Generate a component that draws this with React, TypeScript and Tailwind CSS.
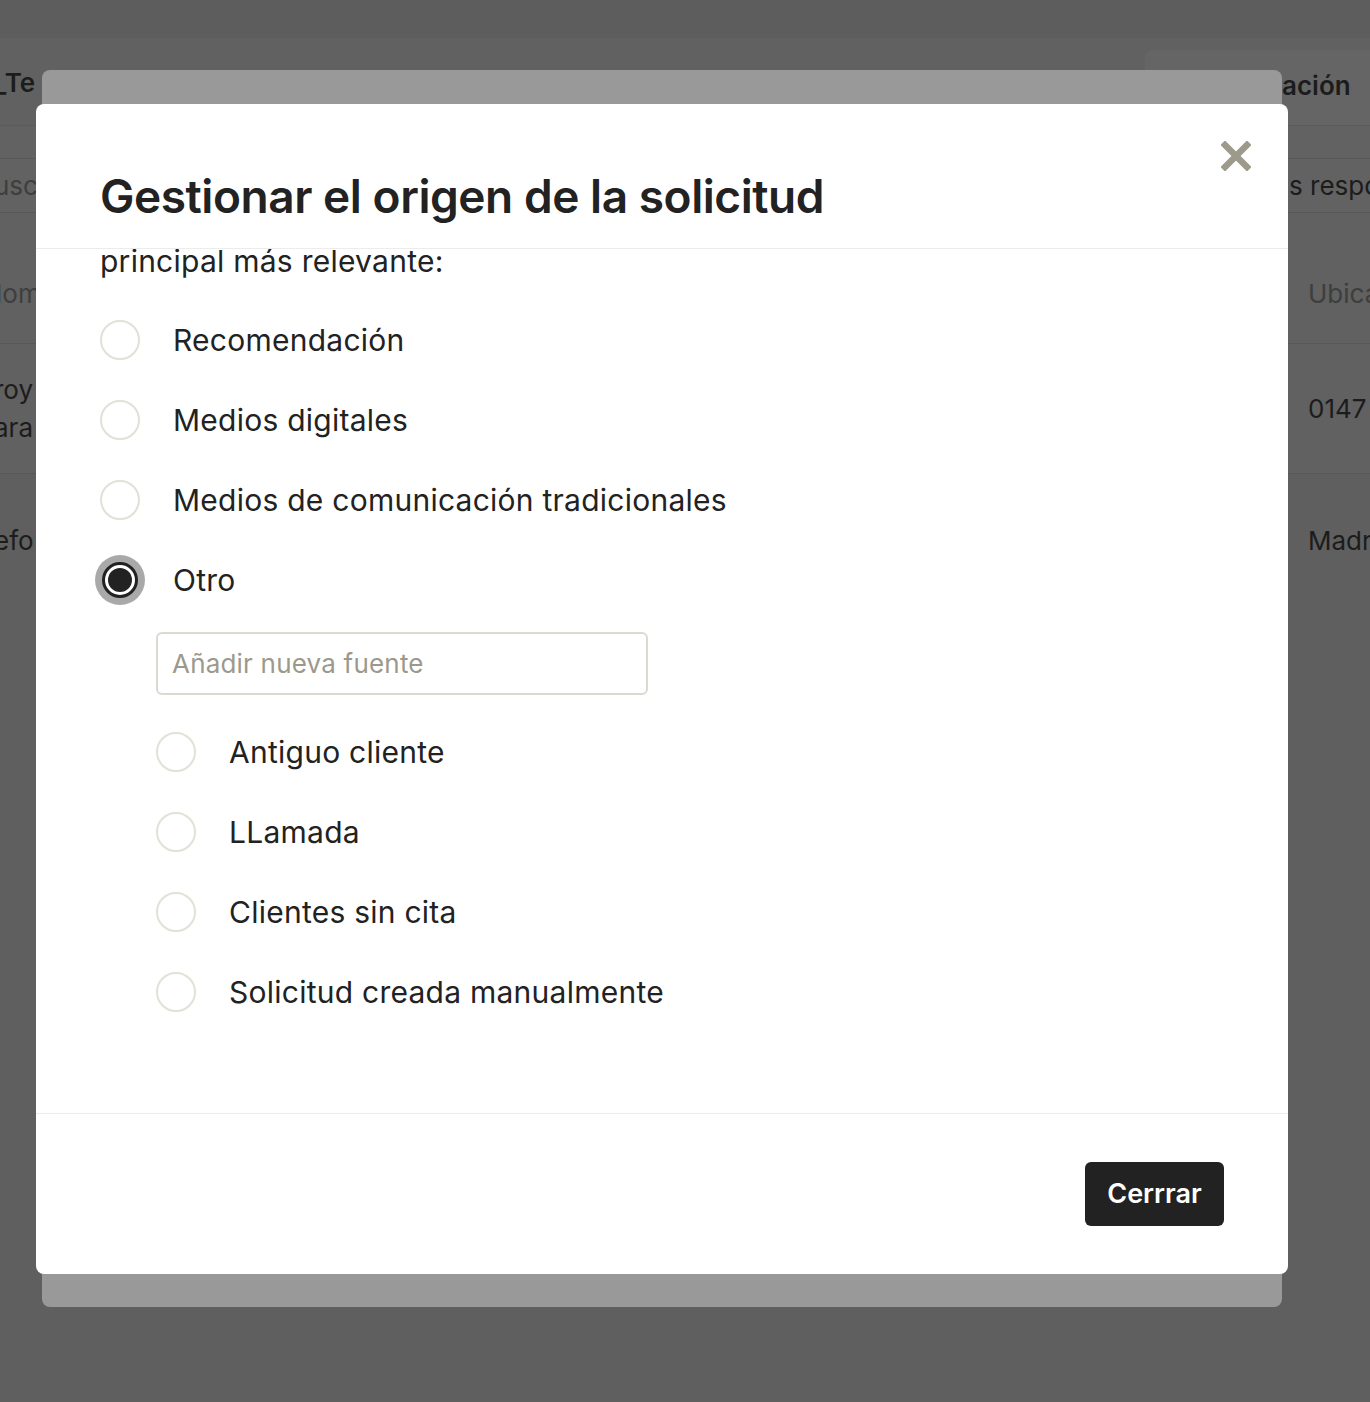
import React from 'react'

const FONT = { fontFamily: 'Inter, "Noto Sans", "Liberation Sans", sans-serif' }

const mainOptions = [
  { label: 'Recomendación', checked: false },
  { label: 'Medios digitales', checked: false },
  { label: 'Medios de comunicación tradicionales', checked: false },
  { label: 'Otro', checked: true },
]

const subOptions = ['Antiguo cliente', 'LLamada', 'Clientes sin cita', 'Solicitud creada manualmente']

function Radio({ checked }: { checked?: boolean }) {
  return (
    <span className="flex h-10 w-10 shrink-0 items-center justify-center">
      {checked ? (
        <span className="flex h-[50px] w-[50px] shrink-0 items-center justify-center rounded-full bg-[#a9a9a9]">
          <span className="flex h-[36px] w-[36px] items-center justify-center rounded-full border-[3px] border-[#222] bg-white">
            <span className="h-[24px] w-[24px] rounded-full bg-[#222]" />
          </span>
        </span>
      ) : (
        <span className="h-10 w-10 rounded-full border-2 border-[#e3e0d8] bg-white" />
      )}
    </span>
  )
}

function Option({ label, checked }: { label: string; checked?: boolean }) {
  return (
    <label className="flex h-20 items-center gap-[33px]">
      <Radio checked={checked} />
      <span className="text-[30px] tracking-[0.25px] text-[#222]">{label}</span>
    </label>
  )
}

function BackgroundPage() {
  return (
    <div className="flex flex-col whitespace-nowrap text-[26px]">
      <div className="h-[38px] bg-[#5d5d5d]" />
      <div className="flex h-[87px] items-start justify-between bg-[#616161] pt-[12px]">
        <span className="-ml-[6px] mt-[13px] font-semibold text-[#1c1c1c]">_Te</span>
        <span className="flex h-[75px] w-[225px] items-center rounded-tl-lg bg-[#656565] pb-[4px] pl-[137px] font-semibold text-[#1c1c1c]">
          ación
        </span>
      </div>
      <div className="h-[33px] border-t border-[#5b5b5b] bg-[#626262]" />
      <div className="flex h-[54px] items-center justify-between border-t border-[#585858] bg-[#626262]">
        <span className="-ml-[6px] text-[#3e3e3e]">usca</span>
        <span className="w-[81px] text-[#1c1c1c]">s respo</span>
      </div>
      <div className="flex h-[131px] items-end justify-between border-t border-[#585858] bg-[#616161] pb-[30px]">
        <span className="-ml-[4px] text-[#3e3e3e]">lom</span>
        <span className="w-[62px] text-[#3e3e3e]">Ubica</span>
      </div>
      <div className="flex h-[130px] items-center justify-between border-t border-[#585858] bg-[#616161]">
        <span className="flex flex-col leading-[38px] text-[#1c1c1c]">
          <span className="-ml-[6px]">roy</span>
          <span className="-ml-[6px]">ara</span>
        </span>
        <span className="w-[62px] text-[#1c1c1c]">0147</span>
      </div>
      <div className="flex h-[929px] items-start justify-between border-t border-[#585858] bg-[#5f5f5f] pt-[47px]">
        <span className="-ml-[6px] text-[#1c1c1c]">efo</span>
        <span className="w-[62px] text-[#1c1c1c]">Madr</span>
      </div>
    </div>
  )
}

export default function App() {
  return (
    <div className="relative h-[1402px] w-[1370px] overflow-hidden bg-[#5d5d5d]" style={FONT}>
      <BackgroundPage />

      {/* stacked dialog behind */}
      <div className="absolute left-[42px] top-[70px] h-[1237px] w-[1240px] rounded-lg bg-[#999]" />

      {/* active dialog */}
      <div className="absolute left-[36px] top-[104px] flex h-[1170px] w-[1252px] flex-col rounded-lg bg-white">
        <div className="relative flex h-[145px] shrink-0 items-end border-b border-[#ececec] pb-[24px] pl-[64px]">
          <h2 className="text-[46px] font-semibold leading-[56px] tracking-[-0.45px] text-[#222]">
            Gestionar el origen de la solicitud
          </h2>
          <button className="absolute right-[37px] top-[37px] h-[30px] w-[30px]" aria-label="Cerrar">
            <svg viewBox="0 0 30 30" className="h-[30px] w-[30px]">
              <path d="M4 4 L26 26 M26 4 L4 26" stroke="#9d9a8b" strokeWidth="6.5" strokeLinecap="square" />
            </svg>
          </button>
        </div>

        <div className="flex-1 overflow-hidden px-[64px]">
          <p className="text-[30px] leading-[24px] tracking-[0.25px] text-[#222]">principal más relevante:</p>
          <div className="mt-[27px] flex flex-col">
            {mainOptions.map(o => (
              <Option key={o.label} label={o.label} checked={o.checked} />
            ))}
          </div>
          <div className="ml-[56px] mt-[12px] flex flex-col">
            <input
              className="h-[63px] w-[492px] rounded-md border-2 border-[#dcd9d0] px-[14px] text-[26px] tracking-[0.2px] text-[#222] outline-none placeholder:text-[#9c998c]"
              placeholder="Añadir nueva fuente"
            />
            <div className="mt-[17px] flex flex-col">
              {subOptions.map(s => (
                <Option key={s} label={s} />
              ))}
            </div>
          </div>
        </div>

        <div className="flex h-[161px] shrink-0 items-center justify-end border-t border-[#ececec] pr-[64px]">
          <button className="h-[64px] w-[139px] rounded-md bg-[#222] text-[27px] font-semibold text-white">
            Cerrrar
          </button>
        </div>
      </div>
    </div>
  )
}
